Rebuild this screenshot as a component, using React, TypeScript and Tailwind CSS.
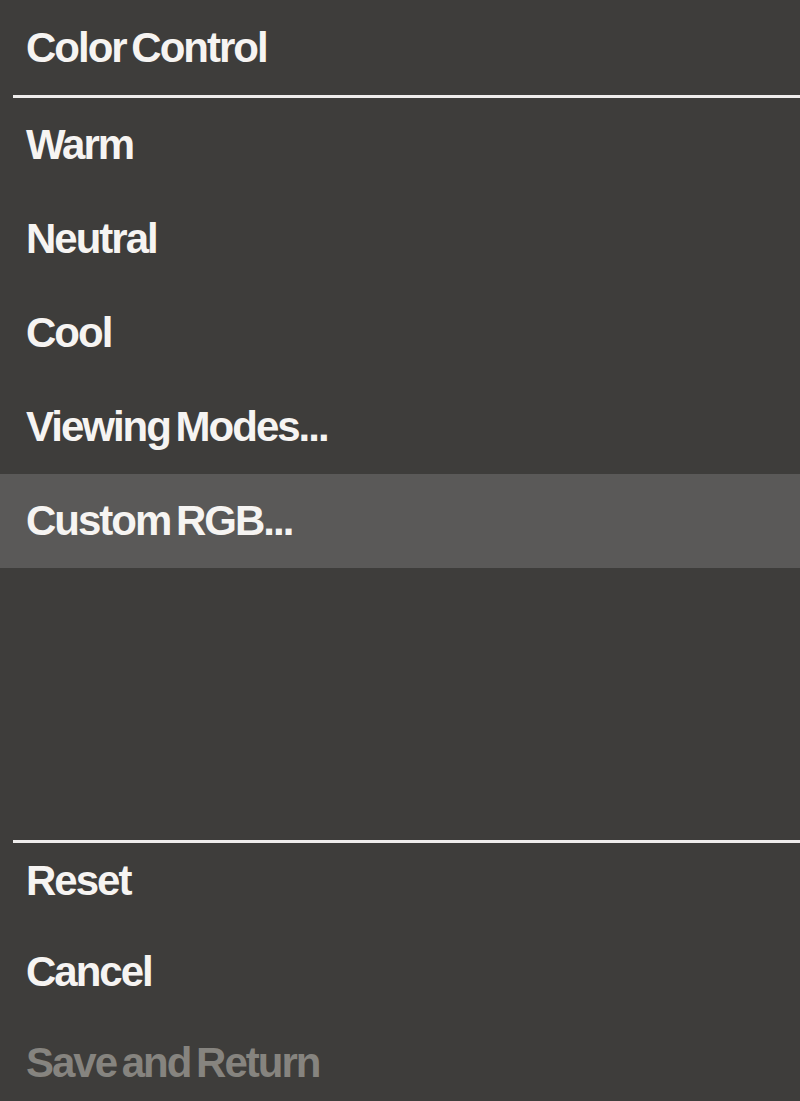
const items = ["Warm", "Neutral", "Cool", "Viewing Modes...", "Custom RGB..."];

const actions = [
  { label: "Reset", disabled: false },
  { label: "Cancel", disabled: false },
  { label: "Save and Return", disabled: true },
];

export default function App() {
  return (
    <div
      className="flex h-[1101px] w-[800px] flex-col overflow-hidden bg-[#3e3d3b] text-[42px] font-bold tracking-[-2px] [word-spacing:-4px] text-[#f6f4f2]"
      style={{ fontFamily: '"Liberation Sans", Arial, sans-serif' }}
    >
      <div className="h-[95px] shrink-0 pl-[26px] leading-[95px]">Color Control</div>
      <div className="ml-[13px] h-[3px] shrink-0 bg-[#efedec]" />
      {items.map((label, i) => (
        <div
          key={label}
          className={`h-[94px] shrink-0 pl-[26px] leading-[94px] ${
            i === items.length - 1 ? "bg-[#5a5958]" : ""
          }`}
        >
          {label}
        </div>
      ))}
      <div className="flex-1" />
      <div className="ml-[13px] h-[3px] shrink-0 bg-[#efedec]" />
      {actions.map((a, i) => (
        <div
          key={a.label}
          className={`shrink-0 pl-[26px] leading-[75px] ${
            i === actions.length - 1 ? "h-[76px]" : "h-[91px]"
          } ${a.disabled ? "text-[#86847f]" : ""}`}
        >
          {a.label}
        </div>
      ))}
    </div>
  );
}
